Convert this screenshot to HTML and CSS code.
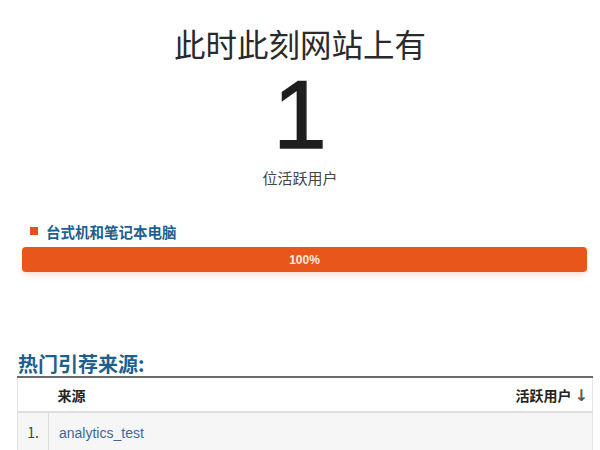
FILE: index.html
```html
<!DOCTYPE html>
<html lang="zh-CN">
<head>
<meta charset="utf-8">
<link rel="stylesheet" href="styles.css">
</head>
<body>
<div class="page">
  <section class="summary">
    <div class="title">此时此刻网站上有</div>
    <div class="count">1</div>
    <div class="subtitle">位活跃用户</div>
  </section>
  <section class="device">
    <div class="legend"><span class="swatch"></span><span class="legend-text">台式机和笔记本电脑</span></div>
    <div class="bar"><span class="bar-label">100%</span></div>
  </section>
  <section class="referrals">
    <h2 class="heading">热门引荐来源:</h2>
    <table class="table">
      <thead>
        <tr>
          <th class="num-col"></th>
          <th class="src-col">来源</th>
          <th class="users-col">活跃用户 <span class="arrow">↓</span></th>
        </tr>
      </thead>
      <tbody>
        <tr>
          <td class="num-col">1.</td>
          <td class="src-col"><a class="link">analytics_test</a></td>
          <td class="users-col"></td>
        </tr>
      </tbody>
    </table>
  </section>
</div>
</body>
</html>
```

FILE: styles.css
```css
html, body {
  margin: 0;
  padding: 0;
  background: #ffffff;
}
body {
  font-family: "Noto Sans CJK SC", "Liberation Sans", sans-serif;
  color: #333333;
  width: 600px;
  height: 450px;
  overflow: hidden;
}
.page {
  padding: 0 8px 0 17px;
}
.summary {
  text-align: center;
  padding-top: 22px;
  margin-left: -9px;
}
.title {
  font-size: 31.5px;
  line-height: 42px;
  color: #2a2a2a;
}
.count {
  font-family: "Liberation Sans", sans-serif;
  font-size: 96px;
  line-height: 96px;
  color: #1e1e1e;
  margin-top: 3px;
  -webkit-text-stroke: 1.5px #1e1e1e;
}
.subtitle {
  font-size: 15px;
  line-height: 20px;
  color: #444444;
  margin-top: 5px;
}
.device {
  margin-top: 34px;
  margin-left: 5px;
  margin-right: 5px;
}
.legend {
  display: flex;
  align-items: center;
  margin-left: 8px;
  height: 18px;
}
.swatch {
  width: 8px;
  height: 8px;
  background: #e0531f;
  margin-right: 8px;
}
.legend-text {
  font-size: 14.5px;
  font-weight: 700;
  color: #1d5f8f;
}
.bar {
  margin-top: 7px;
  height: 25px;
  border-radius: 4px;
  background: #e9561c;
  display: flex;
  align-items: center;
  justify-content: center;
  box-shadow: 0 5px 6px -2px rgba(230, 120, 80, 0.25);
}
.bar-label {
  font-family: "Liberation Sans", sans-serif;
  font-weight: 700;
  font-size: 12px;
  color: #fbe9df;
}
.referrals {
  margin-top: 80px;
}
.heading {
  margin: 0 0 0 1px;
  font-size: 20px;
  line-height: 24px;
  font-weight: 700;
  color: #1d5f8f;
}
.table {
  width: 576px;
  border-collapse: collapse;
  border-top: 2px solid #6a6a6a;
  border-left: 1px solid #e4e4e4;
  border-right: 1px solid #e4e4e4;
  font-size: 14px;
}
.table th {
  height: 33px;
  font-weight: 700;
  color: #222222;
  text-align: left;
  border-bottom: 2px solid #dedede;
  padding: 0;
}
.table td {
  height: 37px;
  background: #f6f6f6;
  padding: 0;
}
.num-col {
  width: 30px;
  text-align: center;
  color: #444444;
}
td.num-col {
  border-right: 1px solid #dcdcdc;
}
th.src-col {
  padding-left: 9px !important;
}
td.src-col {
  padding-left: 10px !important;
}
.users-col {
  text-align: right !important;
  padding-right: 4px !important;
}
.arrow {
  font-family: "DejaVu Sans", sans-serif;
  font-size: 16px;
  color: #555555;
  font-weight: 700;
}
.link {
  font-family: "Liberation Sans", sans-serif;
  color: #3a6a96;
  font-size: 14px;
  text-decoration: none;
}
```
